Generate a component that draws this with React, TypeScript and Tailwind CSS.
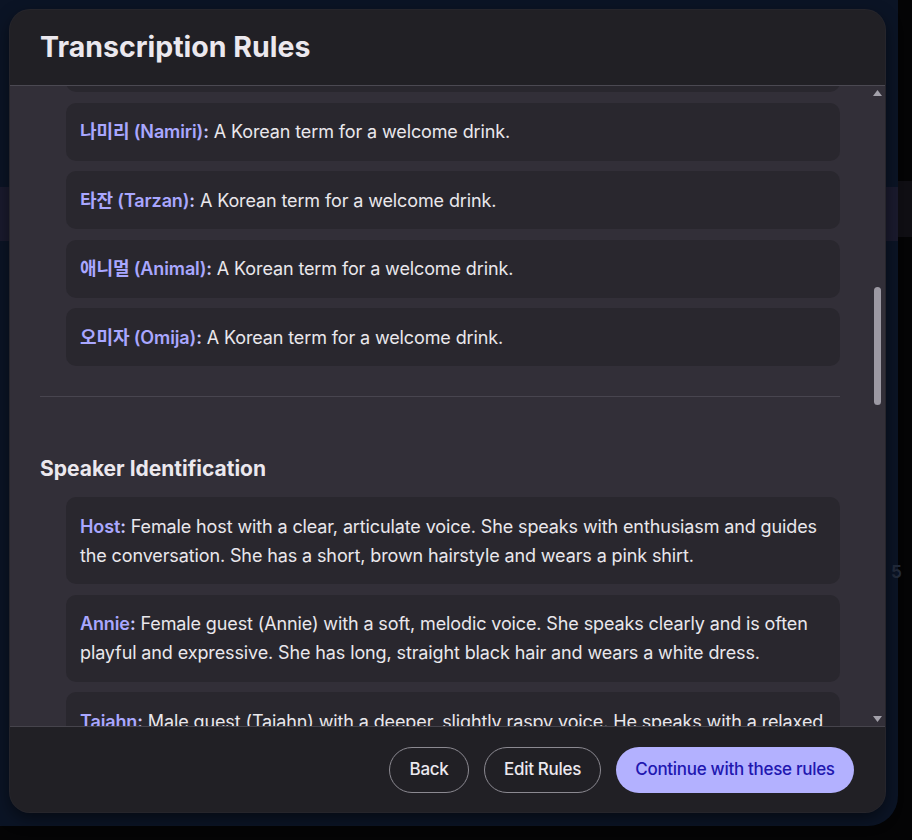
import React, { useLayoutEffect, useRef } from "react";

const FONT = { fontFamily: "Inter, 'Noto Sans CJK KR', sans-serif" };

type Item = { label: string; text: string };

const earlier: Item[] = [
  { label: "웰컴 (Welcome)", text: "A Korean term for a welcome drink." },
  { label: "막걸리 (Makgeolli)", text: "A Korean term for a welcome drink." },
  { label: "소주 (Soju)", text: "A Korean term for a welcome drink." },
];

const terms: Item[] = [
  { label: "나미리 (Namiri)", text: "A Korean term for a welcome drink." },
  { label: "타잔 (Tarzan)", text: "A Korean term for a welcome drink." },
  { label: "애니멀 (Animal)", text: "A Korean term for a welcome drink." },
  { label: "오미자 (Omija)", text: "A Korean term for a welcome drink." },
];

const speakers: Item[] = [
  {
    label: "Host",
    text: "Female host with a clear, articulate voice. She speaks with enthusiasm and guides the conversation. She has a short, brown hairstyle and wears a pink shirt.",
  },
  {
    label: "Annie",
    text: "Female guest (Annie) with a soft, melodic voice. She speaks clearly and is often playful and expressive. She has long, straight black hair and wears a white dress.",
  },
  {
    label: "Tajahn",
    text: "Male guest (Tajahn) with a deeper, slightly raspy voice. He speaks with a relaxed tone and often laughs. He has short curly hair and wears a grey hoodie.",
  },
];

function Card({ item, cardRef }: { item: Item; cardRef?: React.Ref<HTMLDivElement> }) {
  return (
    <div
      ref={cardRef}
      className="rounded-[10px] bg-[#29272e] px-[14px] py-[14.5px] text-[18px] leading-[29px] tracking-[-0.12px] text-[#e9e7ec]"
    >
      <span className="font-semibold text-[#a9a7ff]">{item.label}</span>
      <span className="font-semibold text-[#c9c7ff]">:</span> {item.text}
    </div>
  );
}

function Arrow({ up }: { up?: boolean }) {
  return (
    <svg width="9" height="6" viewBox="0 0 9 6" className="block">
      {up ? (
        <path d="M4.5 0 L9 6 L0 6 Z" fill="#a3a1aa" />
      ) : (
        <path d="M0 0 L9 0 L4.5 6 Z" fill="#a3a1aa" />
      )}
    </svg>
  );
}

export default function App() {
  const scroller = useRef<HTMLDivElement>(null);
  const anchor = useRef<HTMLDivElement>(null);

  useLayoutEffect(() => {
    if (scroller.current && anchor.current) {
      scroller.current.scrollTop = anchor.current.offsetTop - 17;
    }
  }, []);

  return (
    <div className="relative h-[840px] w-[912px] overflow-hidden bg-[#040405]" style={FONT}>
      {/* backdrop page */}
      <div className="absolute left-[-40px] top-[-40px] h-[866px] w-[938px] rounded-[30px] bg-[#0b1425]" />
      <div className="absolute left-0 top-[187px] h-[54px] w-[898px] bg-[#1a1a2d]" />
      <div className="absolute left-[898px] top-[181px] h-[56px] w-[14px] bg-[#0f0e13]" />
      <div className="absolute left-[891px] top-[560px] text-[17px] font-bold text-[#222a3a]">5</div>

      {/* modal */}
      <div className="absolute left-[10px] top-[10px] flex h-[802px] w-[875px] flex-col overflow-hidden rounded-[20px] bg-[#212025] shadow-[0_0_0_1px_#26252b,0_6px_16px_rgba(0,0,0,0.5)]">
        <div className="flex h-[76px] shrink-0 items-center border-b border-[#4b4952] px-[30px]">
          <h1 className="text-[28.5px] font-bold text-[#ebe8ee]">Transcription Rules</h1>
        </div>

        <div className="flex min-h-0 flex-1 bg-[#322f38]">
          <div
            ref={scroller}
            className="relative min-w-0 flex-1 overflow-hidden px-[30px] pb-[30px]"
          >
            <h2 className="pt-[30px] text-[21px] font-bold leading-[28px] text-[#ebe8ee]">Vocabulary</h2>
            <div className="ml-[26px] mt-[14px] flex flex-col gap-[10.5px]">
              {earlier.map((t) => (
                <Card key={t.label} item={t} />
              ))}
              {terms.map((t, i) => (
                <Card key={t.label} item={t} cardRef={i === 0 ? anchor : undefined} />
              ))}
            </div>
            <div className="mt-[30px] border-t border-[#48454f]" />
            <h2 className="mt-[58px] text-[21px] font-bold leading-[28px] text-[#ebe8ee]">
              Speaker Identification
            </h2>
            <div className="ml-[26px] mt-[14px] flex flex-col gap-[10.5px]">
              {speakers.map((t) => (
                <Card key={t.label} item={t} />
              ))}
            </div>
          </div>

          <div className="flex w-[15px] shrink-0 flex-col items-center">
            <div className="mt-[4px]">
              <Arrow up />
            </div>
            <div className="mt-[191px] h-[118px] w-[7px] rounded-full bg-[#9c99a3]" />
            <div className="flex-1" />
            <div className="mb-[4px]">
              <Arrow />
            </div>
          </div>
        </div>

        <div className="flex h-[86px] shrink-0 items-center justify-end gap-[15px] border-t border-[#46444c] px-[31px]">
          <button className="flex h-[46px] w-[80px] items-center justify-center rounded-full border border-[#8b8991] text-[17px] font-medium tracking-[-0.3px] text-[#ece9ef]">
            Back
          </button>
          <button className="flex h-[46px] w-[117px] items-center justify-center rounded-full border border-[#8b8991] text-[17px] font-medium tracking-[-0.3px] text-[#ece9ef]">
            Edit Rules
          </button>
          <button className="flex h-[46px] w-[238px] items-center justify-center rounded-full bg-[#b3b1ff] text-[17px] font-medium tracking-[-0.3px] text-[#2117b0]">
            Continue with these rules
          </button>
        </div>
      </div>
    </div>
  );
}
